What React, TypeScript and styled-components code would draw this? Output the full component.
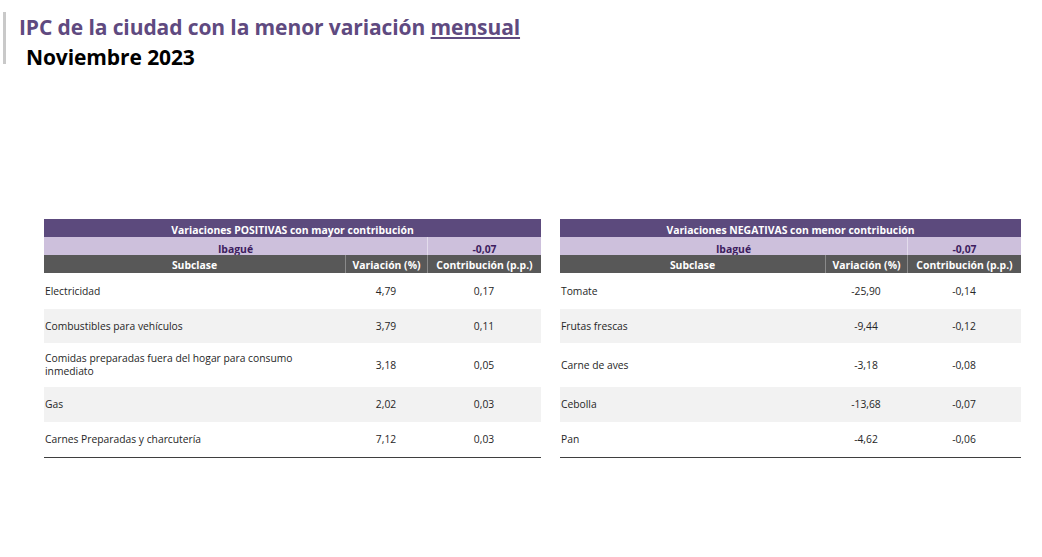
import React from "react";
import styled, { createGlobalStyle } from "styled-components";

const GlobalStyle = createGlobalStyle`
  html, body {
    margin: 0;
    padding: 0;
    background: #ffffff;
  }
  body {
    font-family: "Open Sans", "Noto Sans", "Liberation Sans", sans-serif;
    color: #1f1f1f;
  }
`;

const Page = styled.div`
  width: 1042px;
  height: 557px;
  overflow: hidden;
  background: #fff;
`;

const TitleBlock = styled.div`
  margin: 12px 0 0 3px;
  height: 52px;
  border-left: 3px solid #c9c9c9;
  padding-left: 13px;
  display: flex;
  flex-direction: column;
`;

const Title = styled.h1`
  margin: 2px 0 0 0;
  font-size: 21px;
  line-height: 26px;
  font-weight: 700;
  color: #5f4a80;
  letter-spacing: -0.1px;

  u {
    text-decoration-thickness: 2px;
    text-underline-offset: 2px;
  }
`;

const Subtitle = styled.h2`
  margin: 4px 0 0 7px;
  font-size: 21px;
  line-height: 26px;
  font-weight: 700;
  color: #000;
  letter-spacing: -0.1px;
`;

const Tables = styled.div`
  display: flex;
  gap: 19px;
  margin: 155px 0 0 44px;
  align-items: flex-start;
`;

const Table = styled.div<{ $first: number }>`
  display: grid;
  grid-template-columns: ${(p) => p.$first}px 82px 114px;
  border-bottom: 1px solid #3f3f3f;
`;

const BandTitle = styled.div`
  grid-column: 1 / -1;
  background: #5c4a7d;
  color: #fff;
  font-size: 10.4px;
  font-weight: 700;
  height: 18px;
  line-height: 22px;
  text-align: center;
  overflow: hidden;
`;

const CityCell = styled.div<{ $span?: boolean }>`
  grid-column: ${(p) => (p.$span ? "1 / 3" : "auto")};
  background: #cdc0dc;
  color: #3d1d60;
  font-size: 10.4px;
  font-weight: 700;
  height: 18px;
  line-height: 24px;
  text-align: center;
  overflow: hidden;
  border-left: ${(p) => (p.$span ? "none" : "1px solid #e3dcec")};
`;

const HeadCell = styled.div<{ $divider?: boolean }>`
  background: #585858;
  color: #fff;
  font-size: 10.4px;
  font-weight: 700;
  height: 18px;
  line-height: 20px;
  text-align: center;
  white-space: nowrap;
  overflow: hidden;
  border-left: ${(p) => (p.$divider ? "1px solid #8a8a8a" : "none")};
`;

const Cell = styled.div<{ $shade: boolean; $h: number; $label?: boolean }>`
  background: ${(p) => (p.$shade ? "#f2f2f2" : "#fff")};
  height: ${(p) => p.$h}px;
  display: flex;
  align-items: center;
  justify-content: ${(p) => (p.$label ? "flex-start" : "center")};
  padding: ${(p) => (p.$label ? "0 50px 0 1px" : "0")};
  box-sizing: border-box;
  font-size: 10.3px;
  line-height: 13px;
  color: #262626;
`;

type Row = { name: string; variation: string; contribution: string };

const positivas: Row[] = [
  { name: "Electricidad", variation: "4,79", contribution: "0,17" },
  { name: "Combustibles para vehículos", variation: "3,79", contribution: "0,11" },
  {
    name: "Comidas preparadas fuera del hogar para consumo inmediato",
    variation: "3,18",
    contribution: "0,05",
  },
  { name: "Gas", variation: "2,02", contribution: "0,03" },
  { name: "Carnes Preparadas y charcutería", variation: "7,12", contribution: "0,03" },
];

const negativas: Row[] = [
  { name: "Tomate", variation: "-25,90", contribution: "-0,14" },
  { name: "Frutas frescas", variation: "-9,44", contribution: "-0,12" },
  { name: "Carne de aves", variation: "-3,18", contribution: "-0,08" },
  { name: "Cebolla", variation: "-13,68", contribution: "-0,07" },
  { name: "Pan", variation: "-4,62", contribution: "-0,06" },
];

// alto de cada fila, igual en las dos tablas (la tercera lleva dos líneas)
const rowHeights = [36, 34, 44, 35, 35];

function VariationTable({
  title,
  first,
  total,
  rows,
}: {
  title: string;
  first: number;
  total: string;
  rows: Row[];
}) {
  return (
    <Table $first={first}>
      <BandTitle>{title}</BandTitle>
      <CityCell $span>Ibagué</CityCell>
      <CityCell>{total}</CityCell>
      <HeadCell>Subclase</HeadCell>
      <HeadCell $divider>Variación (%)</HeadCell>
      <HeadCell $divider>Contribución (p.p.)</HeadCell>
      {rows.map((r, i) => {
        const shade = i % 2 === 1;
        const h = rowHeights[i];
        return (
          <React.Fragment key={r.name}>
            <Cell $shade={shade} $h={h} $label>
              {r.name}
            </Cell>
            <Cell $shade={shade} $h={h}>
              {r.variation}
            </Cell>
            <Cell $shade={shade} $h={h}>
              {r.contribution}
            </Cell>
          </React.Fragment>
        );
      })}
    </Table>
  );
}

export default function App() {
  return (
    <Page>
      <GlobalStyle />
      <TitleBlock>
        <Title>
          IPC de la ciudad con la menor variación <u>mensual</u>
        </Title>
        <Subtitle>Noviembre 2023</Subtitle>
      </TitleBlock>
      <Tables>
        <VariationTable
          title="Variaciones POSITIVAS con mayor contribución"
          first={301}
          total="-0,07"
          rows={positivas}
        />
        <VariationTable
          title="Variaciones NEGATIVAS con menor contribución"
          first={265}
          total="-0,07"
          rows={negativas}
        />
      </Tables>
    </Page>
  );
}
